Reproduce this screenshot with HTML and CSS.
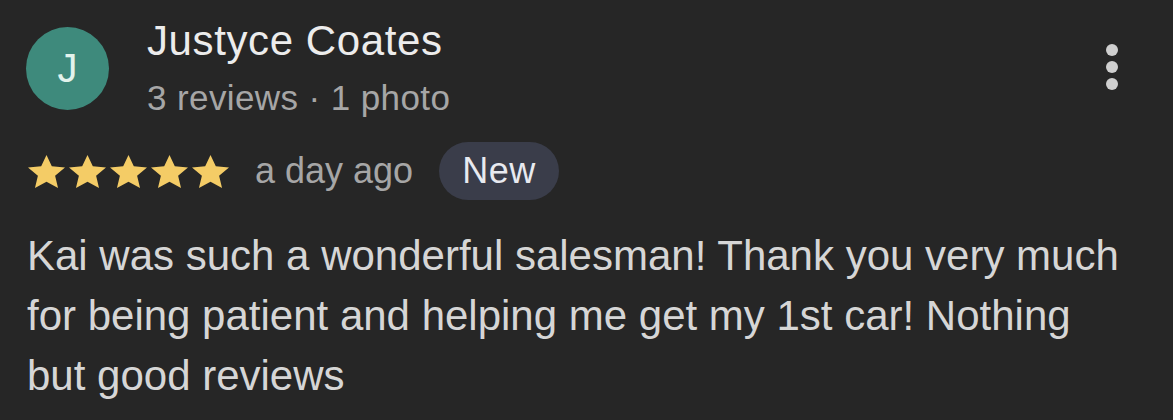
FILE: index.html
```html
<!DOCTYPE html>
<html lang="en">
<head>
    <meta charset="UTF-8">
    <meta name="viewport" content="width=device-width, initial-scale=1.0">
    <title>Review</title>
    <link rel="stylesheet" href="styles.css">
</head>
<body>
    <div class="review">
        <div class="header">
            <div class="avatar">J</div>
            <div class="author">
                <div class="name">Justyce Coates</div>
                <div class="meta">3 reviews · 1 photo</div>
            </div>
            <div class="more">
                <span class="dot"></span>
                <span class="dot"></span>
                <span class="dot"></span>
            </div>
        </div>
        <div class="rating">
            <div class="stars">
                <svg viewBox="1.9 2.2 20.2 19.2" preserveAspectRatio="none"><path d="M12 2.2l2.9 6.6 7.2.7-5.4 4.8 1.6 7.1L12 17.7l-6.3 3.7 1.6-7.1-5.4-4.8 7.2-.7z"/></svg>
                <svg viewBox="1.9 2.2 20.2 19.2" preserveAspectRatio="none"><path d="M12 2.2l2.9 6.6 7.2.7-5.4 4.8 1.6 7.1L12 17.7l-6.3 3.7 1.6-7.1-5.4-4.8 7.2-.7z"/></svg>
                <svg viewBox="1.9 2.2 20.2 19.2" preserveAspectRatio="none"><path d="M12 2.2l2.9 6.6 7.2.7-5.4 4.8 1.6 7.1L12 17.7l-6.3 3.7 1.6-7.1-5.4-4.8 7.2-.7z"/></svg>
                <svg viewBox="1.9 2.2 20.2 19.2" preserveAspectRatio="none"><path d="M12 2.2l2.9 6.6 7.2.7-5.4 4.8 1.6 7.1L12 17.7l-6.3 3.7 1.6-7.1-5.4-4.8 7.2-.7z"/></svg>
                <svg viewBox="1.9 2.2 20.2 19.2" preserveAspectRatio="none"><path d="M12 2.2l2.9 6.6 7.2.7-5.4 4.8 1.6 7.1L12 17.7l-6.3 3.7 1.6-7.1-5.4-4.8 7.2-.7z"/></svg>
            </div>
            <span class="when">a day ago</span>
            <span class="badge">New</span>
        </div>
        <p class="text">Kai was such a wonderful salesman! Thank you very much for being patient and helping me get my 1st car! Nothing but good reviews</p>
    </div>
</body>
</html>
```

FILE: styles.css
```css
body, html {
    margin: 0;
    padding: 0;
    height: 100%;
    background-color: #262626;
    font-family: 'Liberation Sans', Arial, sans-serif;
    overflow: hidden;
}
.review {
    padding: 27px 0 0 26px;
    width: 1120px;
}
.header {
    display: flex;
    align-items: flex-start;
}
.avatar {
    width: 83px;
    height: 83px;
    border-radius: 50%;
    background-color: #3e8a7c;
    color: #e2f3ec;
    font-size: 40px;
    display: flex;
    align-items: center;
    justify-content: center;
    flex-shrink: 0;
}
.author {
    margin-left: 38px;
    flex: 1;
    margin-top: -11px;
}
.name {
    color: #ececec;
    font-size: 42px;
    line-height: 50px;
    letter-spacing: 0.6px;
}
.meta {
    margin-top: 10px;
    color: #a6a6a6;
    font-size: 35px;
    line-height: 44px;
    letter-spacing: 0.4px;
}
.more {
    display: flex;
    flex-direction: column;
    gap: 5px;
    margin-top: 17px;
    margin-right: 28px;
}
.dot {
    width: 12px;
    height: 12px;
    border-radius: 50%;
    background-color: #cfcfcf;
}
.rating {
    display: flex;
    align-items: center;
    margin-top: 22px;
    margin-left: 2px;
}
.stars {
    display: flex;
    gap: 4px;
}
.stars svg {
    width: 37px;
    height: 33px;
    fill: #f4cc66;
}
.when {
    color: #a6a6a6;
    font-size: 36px;
    margin-left: 26px;
}
.badge {
    margin-left: 26px;
    background-color: #3a3d4a;
    color: #e8eaf0;
    font-size: 36px;
    line-height: 42px;
    letter-spacing: 0.5px;
    padding: 8px 23px;
    border-radius: 30px;
}
.text {
    margin: 26px 0 0 1px;
    max-width: 1100px;
    color: #d6d6d6;
    font-size: 42px;
    line-height: 60px;
}
```
